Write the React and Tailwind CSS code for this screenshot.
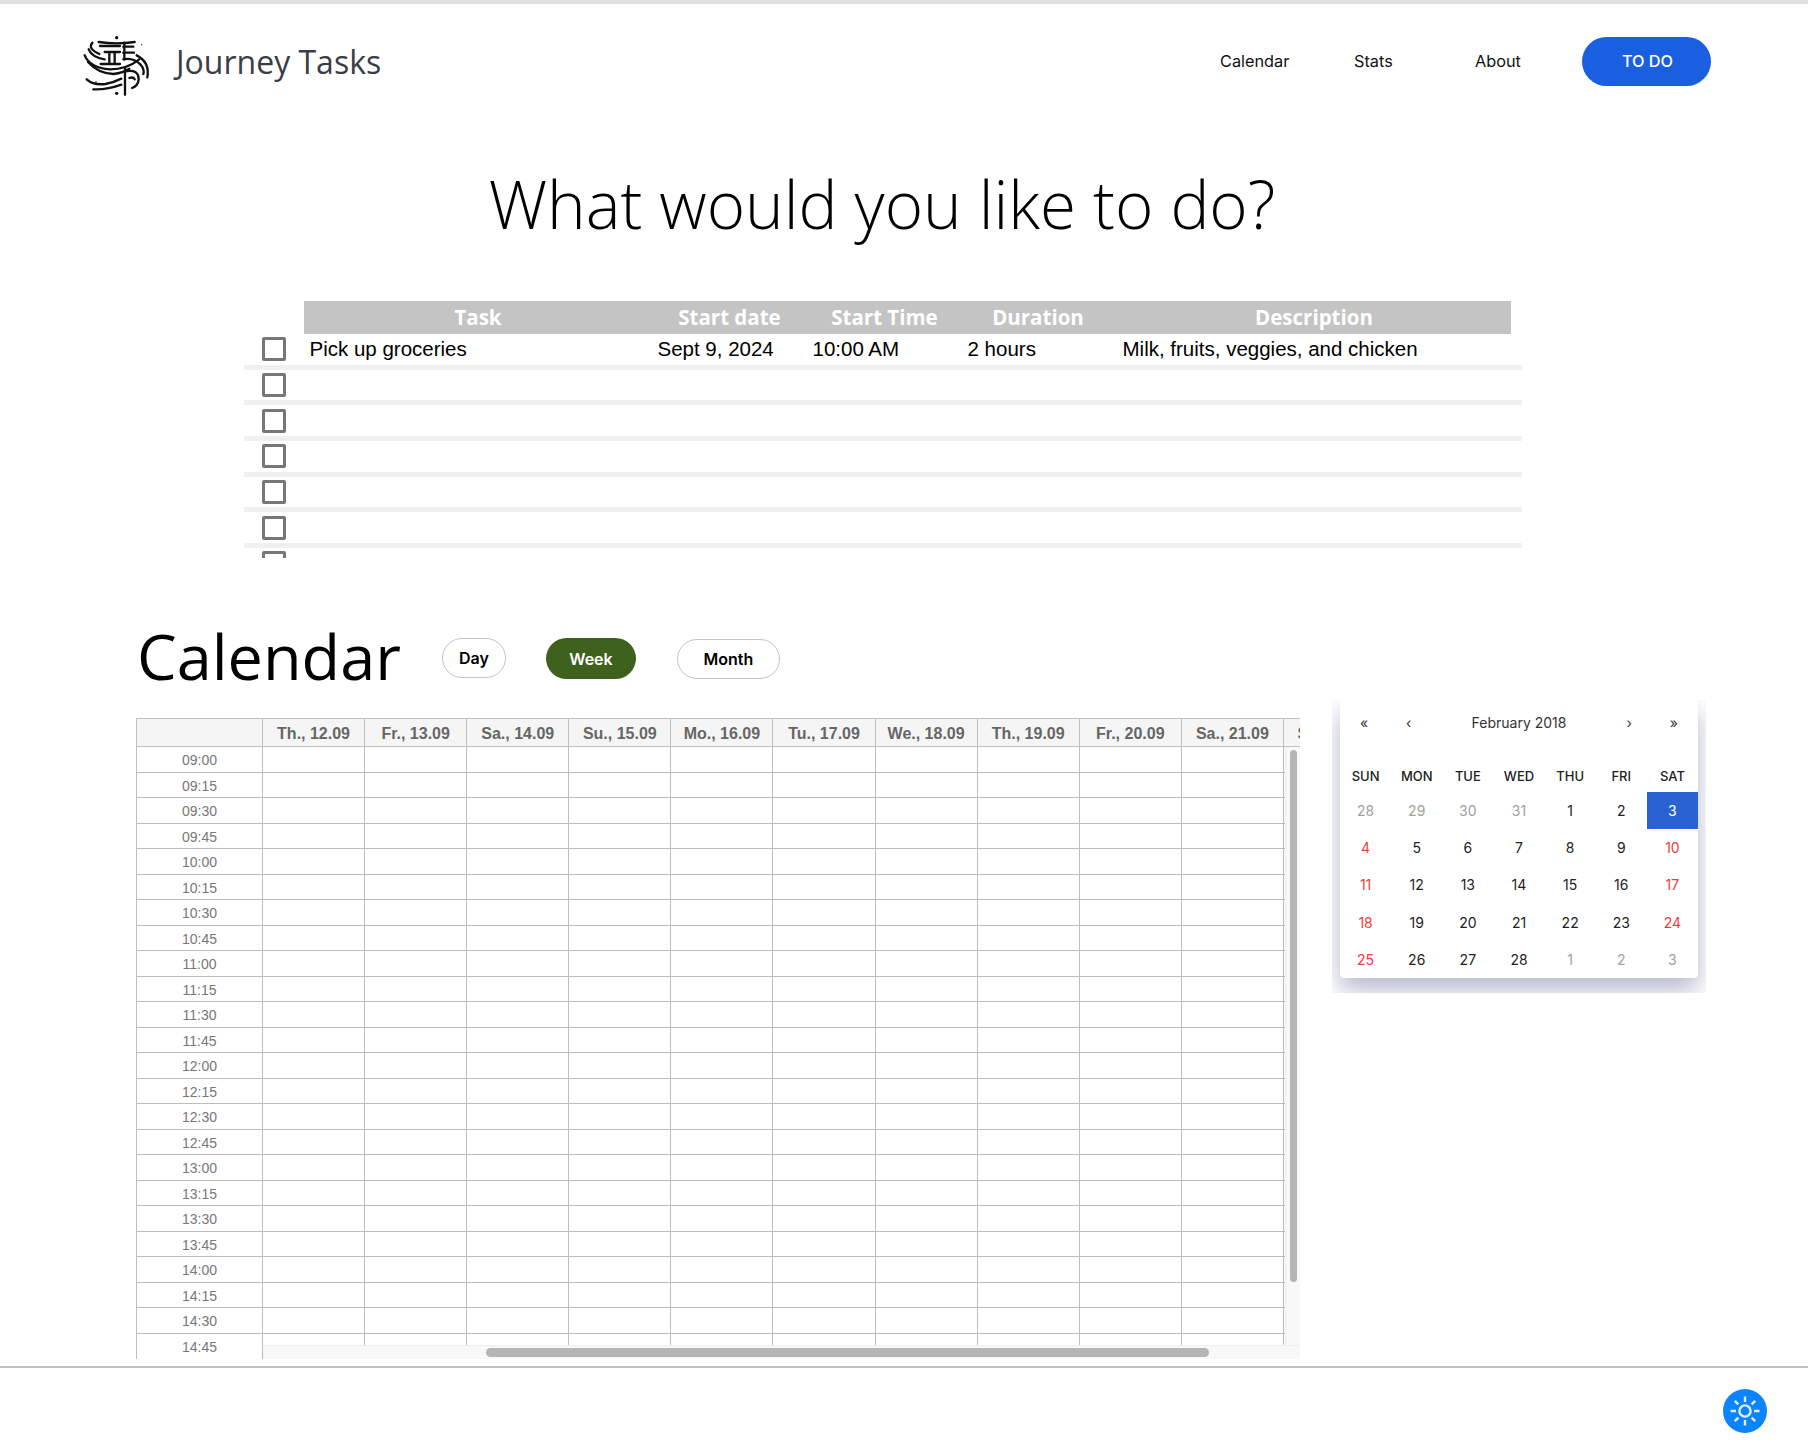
const TIMES = ['09:00','09:15','09:30','09:45','10:00','10:15','10:30','10:45','11:00','11:15','11:30','11:45','12:00','12:15','12:30','12:45','13:00','13:15','13:30','13:45','14:00','14:15','14:30','14:45']
const DAYS = ['Th., 12.09','Fr., 13.09','Sa., 14.09','Su., 15.09','Mo., 16.09','Tu., 17.09','We., 18.09','Th., 19.09','Fr., 20.09','Sa., 21.09','Su., 22.09']
const WEEKDAYS = ['SUN','MON','TUE','WED','THU','FRI','SAT']
const MONTH = [
  [28,29,30,31,1,2,3],
  [4,5,6,7,8,9,10],
  [11,12,13,14,15,16,17],
  [18,19,20,21,22,23,24],
  [25,26,27,28,1,2,3],
]

function Logo() {
  return (
    <svg width="100" height="80" viewBox="0 0 300 240" fill="none" stroke="#111" strokeWidth="7" strokeLinecap="round" className="flex-none">
      <circle cx="140" cy="47" r="5" fill="#111" stroke="none" />
      <circle cx="140" cy="214" r="5" fill="#111" stroke="none" />
      <circle cx="215" cy="68" r="2" fill="#333" stroke="none" />
      <path d="M86 60 Q140 68 194 60" />
      <path d="M90 72 H150 M160 74 H190" />
      <path d="M104 90 H150 M160 92 H192" />
      <path d="M118 92 V124 M134 92 V124 M163 62 V112" />
      <path d="M92 126 H150 M160 112 Q190 106 212 128 Q224 142 220 156" />
      <path d="M67 62 Q52 80 88 96" />
      <path d="M56 82 Q66 106 104 112" />
      <path d="M44 100 Q60 138 120 142 Q170 142 208 112" />
      <path d="M54 120 Q84 154 130 156 Q160 152 178 140" />
      <path d="M200 100 Q240 120 232 166" />
      <path d="M165 138 V218" />
      <path d="M165 148 Q206 140 206 172 Q204 192 186 198" />
      <path d="M178 168 Q190 164 194 172" />
      <path d="M50 172 Q70 190 106 186 Q130 182 154 170" />
      <path d="M70 202 Q110 204 154 188" />
      <circle cx="78" cy="180" r="2.5" fill="#111" stroke="none" />
    </svg>
  )
}

function SunIcon() {
  return (
    <svg width="32" height="32" viewBox="0 0 32 32" fill="none" stroke="#e6ebf2" strokeWidth="2.4">
      <circle cx="16" cy="16" r="5.6" />
      <path d="M16 1.5 V7 M16 25 V30.5 M1.5 16 H7 M25 16 H30.5 M5.8 5.8 L9.4 9.4 M22.6 22.6 L26.2 26.2 M5.8 26.2 L9.4 22.6 M22.6 9.4 L26.2 5.8" />
    </svg>
  )
}

function Pill({ children, className }) {
  return <div className={`flex items-center justify-center rounded-full text-[16px] font-semibold ${className}`}>{children}</div>
}

function TaskRow({ cells }) {
  return (
    <div className="flex flex-none flex-col">
      <div className="flex h-[30.7px] items-center pl-[18px]">
        <div className="box-border h-6 w-6 flex-none rounded-[2px] border-[3px] border-[#777777]" />
        <div className="ml-[18px] grid grid-cols-[348px_155px_155px_155px_394px] font-['Liberation_Sans',sans-serif] text-[20.5px] text-black">
          {cells && cells.map((c, i) => <div key={i} className="pl-[5.5px]">{c}</div>)}
        </div>
      </div>
      <div className="h-[5px] bg-[#f0f0f0]" />
    </div>
  )
}

export default function App() {
  return (
    <div className="relative h-[1454px] overflow-hidden bg-white font-['Open_Sans',sans-serif]">
      <div className="h-1 bg-[#e0e0e0]" />

      <header className="flex h-[116px] items-center pl-[70px]">
        <Logo />
        <span className="ml-[6px] text-[32px] leading-none text-[#3a3d45]">Journey Tasks</span>
        <nav className="ml-auto -mt-[1px] flex items-center pr-[97px] font-['Inter',sans-serif] text-[16.3px] text-[#111111]">
          <span className="w-[134px]">Calendar</span>
          <span className="w-[121px]">Stats</span>
          <span className="w-[107px]">About</span>
          <div className="flex h-[49px] w-[129px] items-center justify-center rounded-full bg-[#1a5fe0] pl-[2px] font-medium text-white">TO DO</div>
        </nav>
      </header>

      <h1 className="mt-[39px] pr-[44px] text-center text-[65.5px] font-light leading-[90px] text-black">What would you like to do?</h1>

      <section className="mt-[52px] ml-[244px] w-[1278px]">
        <div className="ml-[60px] grid h-[33px] w-[1207px] grid-cols-[348px_155px_155px_155px_394px] items-center bg-[#c4c4c4] text-center text-[20.5px] font-bold text-white">
          <div>Task</div>
          <div>Start date</div>
          <div>Start Time</div>
          <div className="pr-[3px]">Duration</div>
          <div>Description</div>
        </div>
        <div className="flex h-[224px] flex-col overflow-hidden">
          <TaskRow cells={['Pick up groceries', 'Sept 9, 2024', '10:00 AM', '2 hours', 'Milk, fruits, veggies, and chicken']} />
          <TaskRow />
          <TaskRow />
          <TaskRow />
          <TaskRow />
          <TaskRow />
          <TaskRow />
        </div>
      </section>

      <section className="mt-[56px] flex items-start pl-[136px]">
        <div>
          <div className="flex h-[104px] items-start">
            <h2 className="ml-[1px] mt-[-2px] text-[63px] font-normal leading-[88px] text-black">Calendar</h2>
            <div className="ml-[41px] mt-[24px] flex items-start font-['Inter',sans-serif]">
              <Pill className="h-10 w-16 border border-[#c4c4c4] text-black">Day</Pill>
              <Pill className="ml-[40px] h-[41px] w-[90px] bg-[#3f611e] text-white">Week</Pill>
              <Pill className="ml-[41px] mt-[1px] h-10 w-[103px] border border-[#c4c4c4] text-black">Month</Pill>
            </div>
          </div>

          <div className="relative h-[641px] w-[1164px] overflow-hidden font-['Liberation_Sans',sans-serif]">
            <div className="grid w-max grid-cols-[127px_repeat(11,102.1px)]">
              <div className="h-[29px] border-y border-r border-l border-[#c0c0c0] bg-[#f5f5f5]" />
              {DAYS.map(d => (
                <div key={d} className="flex h-[29px] items-center justify-center border-y border-r border-[#c0c0c0] bg-[#f5f5f5] pt-[2px] text-[16px] font-bold text-[#666666]">{d}</div>
              ))}
              {TIMES.map((t, i) => [
                <div key={t} className={`flex h-[25.5px] items-center justify-center border-r border-l border-[#bdbdbd] pt-[3px] text-[14px] text-[#777777] ${i < TIMES.length - 1 ? 'border-b' : ''}`}>{t}</div>,
                ...DAYS.map(d => <div key={t + d} className="h-[25.5px] border-b border-r border-[#bdbdbd]" />),
              ])}
            </div>

            <div className="absolute right-0 top-[29px] bottom-0 w-[15px] border-l border-[#eeeeee] bg-[#f8f8f8]">
              <div className="ml-1 mt-[3px] h-[532px] w-[7px] rounded-full bg-[#b5b5b5]" />
            </div>
            <div className="absolute bottom-0 left-[127px] right-0 h-[14px] border-t border-[#eeeeee] bg-[#f8f8f8]">
              <div className="ml-[223px] mt-[2px] h-[9px] w-[723px] rounded-full bg-[#b5b5b5]" />
            </div>
          </div>
        </div>

        <div className="ml-[32px] mt-[86px] h-[293px] w-[374px] overflow-hidden px-2 font-['Inter',sans-serif]">
          <div className="h-[278px] rounded-[4px] bg-white text-[13px] shadow-[0_12px_24px_rgba(70,80,130,0.4)]">
            <div className="relative flex h-[44px] items-center justify-center text-[14px] text-[#333333]">
              February 2018
              <span className="absolute left-[20px]">«</span>
              <span className="absolute left-[66px]">‹</span>
              <span className="absolute right-[66px]">›</span>
              <span className="absolute right-[20px]">»</span>
            </div>
            <div className="mt-[23px] grid grid-cols-7 text-center text-[13px] font-medium text-[#222222]">
              {WEEKDAYS.map(d => <div key={d}>{d}</div>)}
            </div>
            <div className="mt-[5px] grid grid-cols-7 text-center text-[14px]">
              {MONTH.map((week, w) => week.map((n, i) => {
                const muted = (w === 0 && i < 4) || (w === 4 && i > 3)
                const selected = w === 0 && i === 6
                const weekend = i === 0 || i === 6
                let color = 'text-[#222222]'
                if (weekend) color = 'text-[#ee3b3b]'
                if (muted) color = 'text-[#a0a0a0]'
                if (selected) color = 'bg-[#2a62d4] text-white'
                return <div key={`${w}-${i}`} className={`flex h-[37.3px] items-center justify-center ${color}`}>{n}</div>
              }))}
            </div>
          </div>
        </div>
      </section>

      <footer className="absolute inset-x-0 bottom-0 h-[88px] border-t-2 border-[#c0c0c0]">
        <div className="absolute left-[1723px] top-[21px] flex h-11 w-11 items-center justify-center rounded-full bg-[#0a84ff]">
          <SunIcon />
        </div>
      </footer>
    </div>
  )
}
